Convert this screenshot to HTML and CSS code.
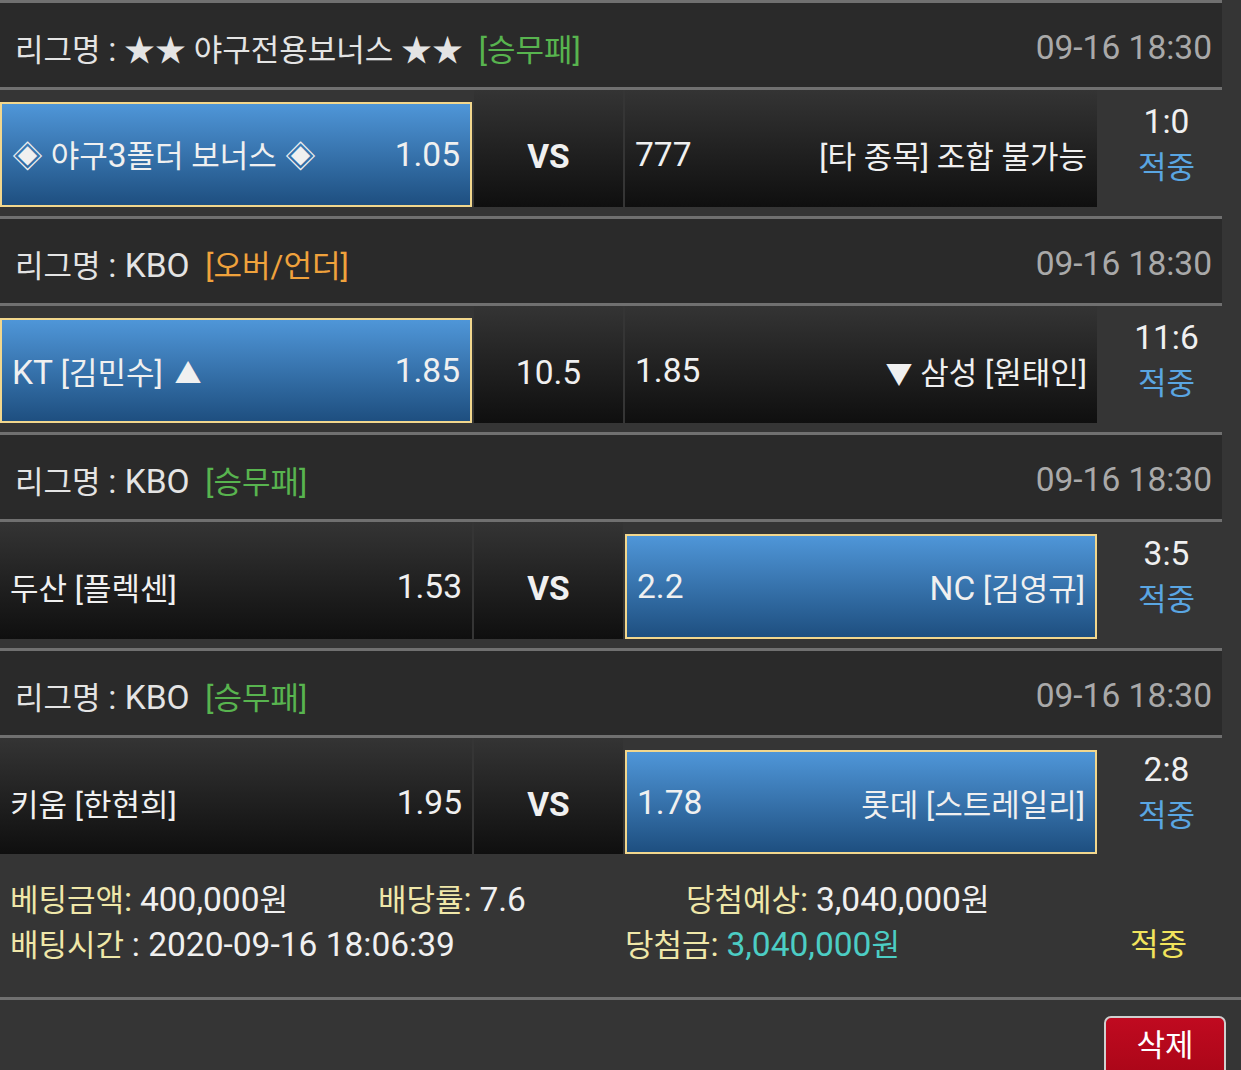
FILE: index.html
```html
<!DOCTYPE html>
<html lang="ko">
<head>
<meta charset="utf-8">
<title>베팅내역</title>
<link rel="stylesheet" href="styles.css">
</head>
<body>
<div class="page">
  <div class="board">
    <div class="rule"></div>
    <div class="league">
      <span class="lname">리그명 <span class="n">:</span> ★★ 야구전용보너스 ★★ <span class="tag green">[승무패]</span></span>
      <span class="time n">09-16 18:30</span>
    </div>
    <div class="rule"></div>
    <div class="match">
      <div class="cell sel"><span>◈ 야구<span class="n">3</span>폴더 보너스 ◈</span><span class="n">1.05</span></div>
      <div class="cell mid"><span class="vs n">VS</span></div>
      <div class="cell"><span class="n">777</span><span>[타 종목] 조합 불가능</span></div>
      <div class="score"><span class="n">1:0</span><span class="hit">적중</span></div>
    </div>
    <div class="rule"></div>

    <div class="league">
      <span class="lname">리그명 <span class="n">: KBO</span> <span class="tag orange">[오버/언더]</span></span>
      <span class="time n">09-16 18:30</span>
    </div>
    <div class="rule"></div>
    <div class="match">
      <div class="cell sel"><span><span class="n">KT</span> [김민수] <span class="tri">▲</span></span><span class="n">1.85</span></div>
      <div class="cell mid"><span class="n">10.5</span></div>
      <div class="cell"><span class="n">1.85</span><span><span class="tri">▼</span> 삼성 [원태인]</span></div>
      <div class="score"><span class="n">11:6</span><span class="hit">적중</span></div>
    </div>
    <div class="rule"></div>

    <div class="league">
      <span class="lname">리그명 <span class="n">: KBO</span> <span class="tag green">[승무패]</span></span>
      <span class="time n">09-16 18:30</span>
    </div>
    <div class="rule"></div>
    <div class="match">
      <div class="cell"><span>두산 [플렉센]</span><span class="n">1.53</span></div>
      <div class="cell mid"><span class="vs n">VS</span></div>
      <div class="cell sel"><span class="n">2.2</span><span><span class="n">NC</span> [김영규]</span></div>
      <div class="score"><span class="n">3:5</span><span class="hit">적중</span></div>
    </div>
    <div class="rule"></div>

    <div class="league">
      <span class="lname">리그명 <span class="n">: KBO</span> <span class="tag green">[승무패]</span></span>
      <span class="time n">09-16 18:30</span>
    </div>
    <div class="rule"></div>
    <div class="match last">
      <div class="cell"><span>키움 [한현희]</span><span class="n">1.95</span></div>
      <div class="cell mid"><span class="vs n">VS</span></div>
      <div class="cell sel"><span class="n">1.78</span><span>롯데 [스트레일리]</span></div>
      <div class="score"><span class="n">2:8</span><span class="hit">적중</span></div>
    </div>
  </div>

  <div class="summary">
    <div class="sline">
      <span class="c1"><span class="lbl">베팅금액<span class="n">:</span></span> <span class="n">400,000</span>원</span>
      <span class="c2"><span class="lbl">배당률<span class="n">:</span></span> <span class="n">7.6</span></span>
      <span><span class="lbl">당첨예상<span class="n">:</span></span> <span class="n">3,040,000</span>원</span>
    </div>
    <div class="sline">
      <span class="c1b"><span class="lbl">배팅시간</span> <span class="n">: 2020-09-16 18:06:39</span></span>
      <span class="c2b"><span class="lbl">당첨금<span class="n">:</span></span> <span class="teal"><span class="n">3,040,000</span>원</span></span>
      <span class="win">적중</span>
    </div>
  </div>
  <div class="rule full"></div>
  <div class="actions">
    <button class="del" type="button">삭제</button>
  </div>
</div>
</body>
</html>
```
FILE: styles.css
```css
html, body {
  margin: 0;
  padding: 0;
  background: #353535;
}
body {
  font-family: Roboto, "Noto Sans CJK KR", "Noto Sans", sans-serif;
  font-size: 31px;
  color: #f0f0f0;
  overflow: hidden;
}
.n {
  font-size: 33.5px;
}
.tri {
  font-size: 27px;
  margin-left: 4px;
}
.page {
  width: 1241px;
  height: 1070px;
  overflow: hidden;
}
.board {
  width: 1222px;
}
.rule {
  height: 3px;
  background: #707070;
}
.rule.full {
  width: 1241px;
}
.league {
  height: 84px;
  background: #2a2a2a;
  display: flex;
  align-items: center;
  justify-content: space-between;
  padding: 4px 10px 0 15px;
  box-sizing: border-box;
  color: #e4e4e4;
  white-space: nowrap;
}
.tag { margin-left: 8px; }
.green { color: #58b44f; }
.orange { color: #f0a23c; }
.time { color: #a9a9a9; }

.match {
  display: grid;
  grid-template-columns: 472px 149px 472px 1fr;
  column-gap: 2px;
  height: 126px;
  padding-bottom: 9px;
  box-sizing: border-box;
}
.match.last {
  height: 116px;
  padding-bottom: 0;
}
.cell {
  display: flex;
  align-items: center;
  justify-content: space-between;
  padding: 12px 10px 0 10px;
  box-sizing: border-box;
  background: linear-gradient(#343434, #0f0f0f);
  white-space: nowrap;
}
.cell.sel {
  margin-top: 12px;
  padding-top: 0;
  border: 2px solid #f2d78d;
  background: linear-gradient(#4f96d8, #1e4f80);
}
.cell.mid {
  justify-content: center;
  padding-top: 16px;
}
.vs {
  font-weight: bold;
}
.score {
  display: flex;
  flex-direction: column;
  align-items: center;
  padding: 9px 0 0 12px;
  line-height: 46px;
}
.hit { color: #5aa6e2; }

.summary {
  padding: 24px 0 29px 10px;
  line-height: 44px;
}
.sline {
  display: flex;
  white-space: nowrap;
}
.lbl { color: #efe7a9; }
.c1 { width: 368px; }
.c2 { width: 308px; }
.c1b { width: 615px; }
.c2b { width: 505px; }
.teal { color: #4ccdc4; }
.win { color: #f1e45c; }

.actions {
  display: flex;
  justify-content: flex-end;
  padding: 16px 15px 0 0;
}
.del {
  width: 122px;
  height: 62px;
  border: 2px solid #cfcfcf;
  border-radius: 7px;
  background: linear-gradient(#c00a20, #aa0618);
  color: #ffffff;
  font-family: Roboto, "Noto Sans CJK KR", sans-serif;
  font-size: 31px;
  padding: 0 0 9px 0;
}
```
